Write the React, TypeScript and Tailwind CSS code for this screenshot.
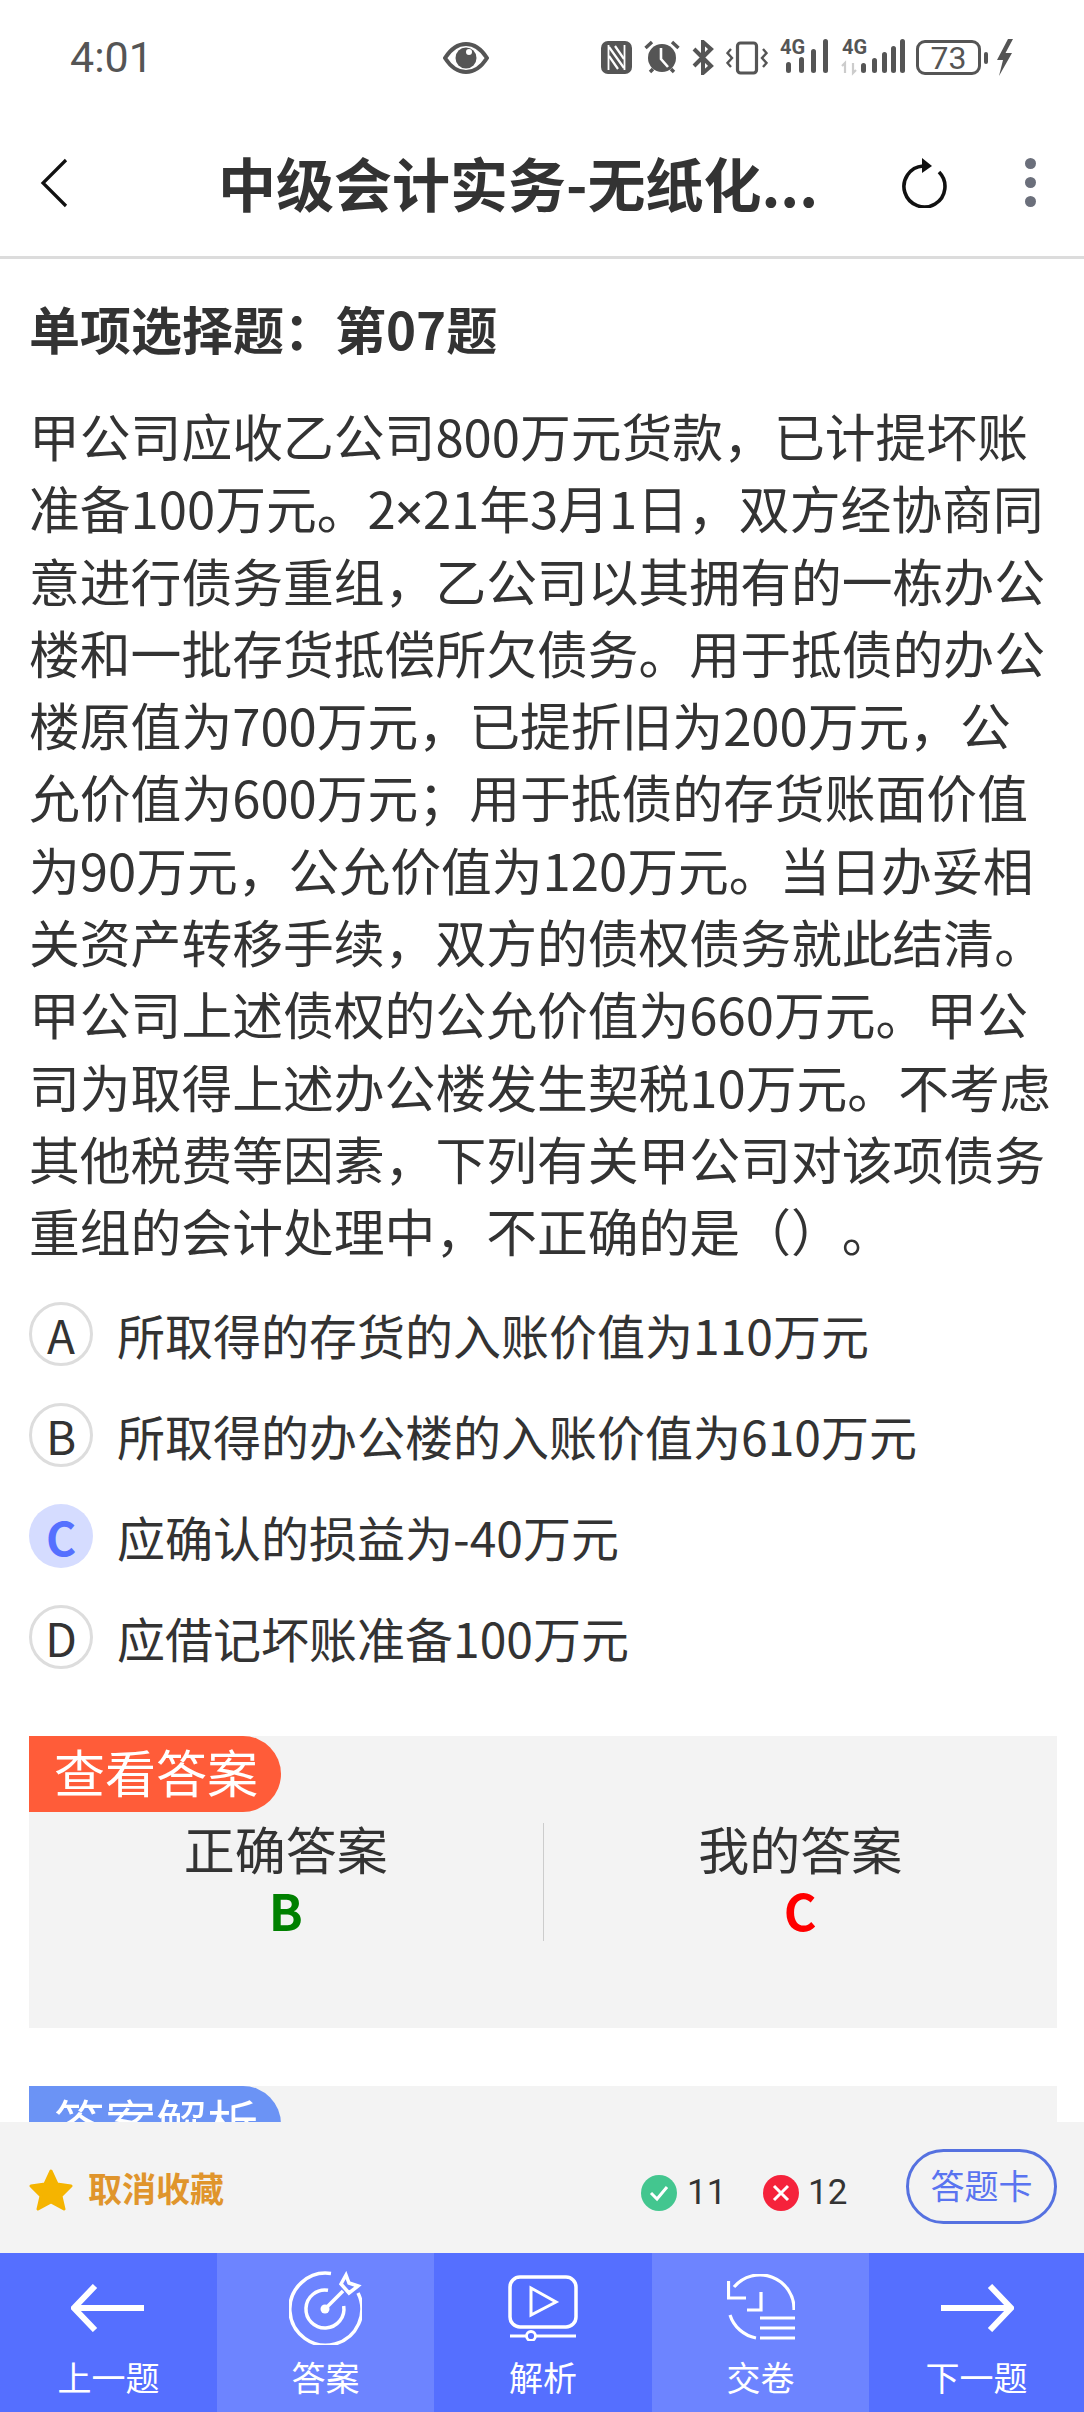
const questionLines = [
  "甲公司应收乙公司800万元货款，已计提坏账",
  "准备100万元。2",
  "意进行债务重组，乙公司以其拥有的一栋办公",
  "楼和一批存货抵偿所欠债务。用于抵债的办公",
  "楼原值为700万元，已提折旧为200万元，公",
  "允价值为600万元；用于抵债的存货账面价值",
  "为90万元，公允价值为120万元。当日办妥相",
  "关资产转移手续，双方的债权债务就此结清。",
  "甲公司上述债权的公允价值为660万元。甲公",
  "司为取得上述办公楼发生契税10万元。不考虑",
  "其他税费等因素，下列有关甲公司对该项债务",
  "重组的会计处理中，不正确的是（）。",
];

const options = [
  { key: "A", text: "所取得的存货的入账价值为110万元" },
  { key: "B", text: "所取得的办公楼的入账价值为610万元" },
  { key: "C", text: "应确认的损益为-40万元", selected: true },
  { key: "D", text: "应借记坏账准备100万元" },
];

function StatusIcons() {
  return (
    <div className="flex items-center text-[#555]">
      <svg width="31" height="33" viewBox="0 0 31 33" className="ml-[112px]">
        <rect width="31" height="33" rx="7" fill="#555" />
        <path d="M8 6l15 21M8 15l9 13M14 5l9 13" stroke="#fff" strokeWidth="2.2" fill="none" />
        <path d="M7.5 4v25M23.5 4v25" stroke="#fff" strokeWidth="1.8" fill="none" />
      </svg>
      <svg width="36" height="35" viewBox="0 0 36 35" className="ml-[12px]">
        <circle cx="18" cy="18" r="14" fill="#555" />
        <path d="M17 8v11l7 8" stroke="#fff" strokeWidth="2.6" fill="none" />
        <path d="M1.5 8L8 2M34.5 8L28 2M6 32l3-3M30 32l-3-3" stroke="#555" strokeWidth="3.4" fill="none" />
      </svg>
      <svg width="22" height="35" viewBox="0 0 22 35" className="ml-[12px]">
        <path d="M2 9l17 17-8 7V2l8 7L2 26" stroke="#555" strokeWidth="4" fill="none" />
      </svg>
      <svg width="42" height="34" viewBox="0 0 42 34" className="ml-[12px]">
        <rect x="11.5" y="2" width="19" height="30" rx="3" stroke="#555" strokeWidth="3.2" fill="none" />
        <path d="M5 8L1.5 12 6 17l-4.500 5L5 26M37 8l3.500 4-4.500 5 4.500 5L37 26" stroke="#555" strokeWidth="2.4" fill="none" />
      </svg>
      <svg width="50" height="36" viewBox="0 0 50 36" className="mb-[4px] ml-[12px] overflow-visible">
        <text x="0" y="16" fontSize="20" fontWeight="700" fill="#555" fontFamily="Roboto, sans-serif">4G</text>
        <rect x="6" y="24" width="5" height="11" rx="2.500" fill="#555" />
        <rect x="19" y="19" width="5" height="16" rx="2.500" fill="#555" />
        <rect x="31" y="11" width="5" height="24" rx="2.500" fill="#555" />
        <rect x="43" y="1" width="5" height="34" rx="2.500" fill="#555" />
      </svg>
      <svg width="63" height="36" viewBox="0 0 63 36" className="mb-[4px] ml-[12px] overflow-visible">
        <text x="0" y="16" fontSize="20" fontWeight="700" fill="#555" fontFamily="Roboto, sans-serif">4G</text>
        <path d="M3 35V25l-3 3M11 25v10l3-3" stroke="#ccc" strokeWidth="2.200" fill="none" />
        <rect x="19" y="25" width="5" height="10" rx="2.500" fill="#555" />
        <rect x="30" y="20" width="5" height="15" rx="2.500" fill="#555" />
        <rect x="40" y="14" width="5" height="21" rx="2.500" fill="#555" />
        <rect x="49" y="8" width="5" height="27" rx="2.500" fill="#555" />
        <rect x="58" y="1" width="5" height="34" rx="2.500" fill="#555" />
      </svg>
      <div className="ml-[11px] flex h-[35px] w-[65px] items-center justify-center rounded-[9px] border-[3px] border-[#555] font-['Roboto',sans-serif] text-[32px] leading-none">
        73
      </div>
      <div className="ml-[3px] h-[12px] w-[4px] rounded-full bg-[#555]"></div>
      <svg width="17" height="37" viewBox="0 0 17 37" className="ml-[8px]">
        <path d="M12 0L1 21h6L3 37 16 14H9.500L17 0z" fill="#555" />
      </svg>
    </div>
  );
}

function AnswerBox({ color, label, children }: { color: string; label: string; children?: React.ReactNode }) {
  return (
    <div className="ml-[29px] mr-[27px] bg-[#f3f3f3]">
      <div className={`flex h-[76px] w-[252px] items-center rounded-r-[38px] pb-[5px] pl-[25px] text-[51px] leading-none text-white ${color}`}>
        {label}
      </div>
      {children}
    </div>
  );
}

function Tab({ label, light, children }: { label: string; light?: boolean; children: React.ReactNode }) {
  return (
    <div className={`flex flex-col items-center ${light ? "bg-[#6d84ff]" : "bg-[#556fff]"}`}>
      <div className="flex h-[109px] items-center">{children}</div>
      <div className="text-[34px] leading-[30px] text-white">{label}</div>
    </div>
  );
}

export default function App() {
  return (
    <div className="relative h-[2412px] w-[1084px] overflow-hidden bg-white font-['Noto_Sans_CJK_SC',sans-serif] text-[#333] [text-spacing-trim:space-all]">
      {/* status bar */}
      <div className="flex h-[114px] items-center pl-[70px] pt-[1px]">
        <div className="w-[76px] whitespace-nowrap font-['Roboto',sans-serif] text-[43px] leading-none text-[#555]">4:01</div>
        <svg width="46" height="32" viewBox="0 0 46 32" className="ml-[297px]">
          <path d="M2 16C9 5 16 2 23 2s14 3 21 14c-7 11-14 14-21 14S9 27 2 16z" stroke="#555" strokeWidth="4" fill="none" />
          <circle cx="23" cy="16" r="10.500" fill="#555" />
          <circle cx="26" cy="10" r="3" fill="#fff" />
        </svg>
        <StatusIcons />
      </div>

      {/* header */}
      <div className="flex h-[145px] items-center border-b-[3px] border-[#dcdcdc] pb-[5px]">
        <svg width="28" height="50" viewBox="0 0 28 50" className="ml-[40px]">
          <path d="M26 2L3 25l23 23" stroke="#111" strokeWidth="3.200" fill="none" />
        </svg>
        <div className="mb-[2px] ml-[150px] w-[620px] whitespace-nowrap text-[58px] font-bold leading-none">中级会计实务-无纸化...</div>
        <svg width="46" height="50" viewBox="0 0 46 50" className="ml-[63px]">
          <path d="M22 8A20.500 20.500 0 1 0 38 14" stroke="#111" strokeWidth="3.600" fill="none" />
          <path d="M21 0l10 8-10 7z" fill="#111" />
        </svg>
        <div className="ml-[78px] flex flex-col gap-[8px]">
          <div className="h-[11px] w-[11px] rounded-full bg-[#6b6f7b]"></div>
          <div className="h-[11px] w-[11px] rounded-full bg-[#6b6f7b]"></div>
          <div className="h-[11px] w-[11px] rounded-full bg-[#6b6f7b]"></div>
        </div>
      </div>

      {/* question */}
      <div className="pl-[29px] pt-[33px]">
        <div className="text-[51px] font-bold leading-[72px]">单项选择题：第07题</div>
        <div className="mt-[35px] text-[50.800px] leading-[72.300px]">
          {questionLines.map((line, i) =>
            i === 1 ? (
              <div key={line} className="whitespace-nowrap">
                {line}
                <span className="font-['Roboto',sans-serif] leading-none">×</span>
                21年3月1日，双方经协商同
              </div>
            ) : (
              <div key={line} className="whitespace-nowrap">{line}</div>
            ),
          )}
        </div>
      </div>

      {/* options */}
      <div className="mt-[17px] pl-[29px]">
        {options.map((o) => (
          <div key={o.key} className="flex h-[101px] items-center">
            <div
              className={
                o.selected
                  ? "flex h-[64px] w-[64px] items-center justify-center rounded-full bg-[#d5dcff] text-[46px] font-bold leading-none text-[#5570ff]"
                  : "flex h-[64px] w-[64px] items-center justify-center rounded-full border-[3px] border-[#ddd] text-[46px] leading-none"
              }
            >
              {o.key}
            </div>
            <div className="ml-[24px] whitespace-nowrap text-[48px] leading-none">{o.text}</div>
          </div>
        ))}
      </div>

      {/* answers */}
      <div className="mt-[48px]">
        <AnswerBox color="bg-[#ff5c39]" label="查看答案">
          <div className="flex h-[216px] pt-[11px]">
            <div className="h-[118px] flex-1 text-center">
              <div className="text-[51px] leading-[50px]">正确答案</div>
              <div className="text-[50px] font-bold leading-[72px] text-[#008000]">B</div>
            </div>
            <div className="h-[118px] w-[1px] bg-[#ccc]"></div>
            <div className="h-[118px] flex-1 text-center">
              <div className="text-[51px] leading-[50px]">我的答案</div>
              <div className="text-[50px] font-bold leading-[72px] text-[#ff0000]">C</div>
            </div>
          </div>
        </AnswerBox>
        <div className="mt-[58px]">
          <AnswerBox color="bg-[#6b93f5]" label="答案解析">
            <div className="h-[216px]"></div>
          </AnswerBox>
        </div>
      </div>

      {/* bottom toolbar, sits over the scrolling content */}
      <div className="absolute inset-x-0 bottom-0">
        <div className="flex h-[131px] items-center bg-[#f3f3f3] pl-[29px] pr-[27px]">
          <svg width="44" height="42" viewBox="0 0 44 42" className="mt-[5px]">
            <path d="M22 2l6 13 14 2-10 10 3 13-13-7-13 7 3-13L2 17l14-2z" fill="#f5b400" stroke="#f5b400" strokeWidth="3" strokeLinejoin="round" />
          </svg>
          <div className="ml-[15px] w-[139px] whitespace-nowrap text-[34px] font-bold leading-none text-[#e0952c]">取消收藏</div>
          <svg width="36" height="36" viewBox="0 0 36 36" className="ml-[414px] mt-[10px]">
            <circle cx="18" cy="18" r="18" fill="#43c68f" />
            <path d="M10 18l6 6 10-12" stroke="#fff" strokeWidth="3" fill="none" />
          </svg>
          <div className="ml-[10px] mt-[10px] w-[33px] font-['Roboto',sans-serif] text-[35px] leading-none">11</div>
          <svg width="36" height="36" viewBox="0 0 36 36" className="ml-[43px] mt-[10px]">
            <circle cx="18" cy="18" r="18" fill="#f5223b" />
            <path d="M11 11l14 14M25 11L11 25" stroke="#fff" strokeWidth="3" fill="none" />
          </svg>
          <div className="ml-[9px] mt-[10px] w-[37px] font-['Roboto',sans-serif] text-[35px] leading-none">12</div>
          <div className="ml-auto mt-[-2px] flex h-[75px] w-[151px] items-center justify-center rounded-[38px] border-[3px] border-[#5571e0] pb-[3px] text-[34px] leading-none text-[#5a74f0]">
            答题卡
          </div>
        </div>
        <div className="grid h-[159px] grid-cols-[217px_217px_218px_217px_215px]">
          <Tab label="上一题">
            <svg width="75" height="48" viewBox="0 0 75 48">
              <path d="M73 24H4M24 2L3 24l21 22" stroke="#fff" strokeWidth="6" fill="none" />
            </svg>
          </Tab>
          <Tab label="答案" light>
            <svg width="73" height="74" viewBox="0 0 73 74">
              <g stroke="#fff" strokeWidth="3.500" fill="none">
                <path d="M42 2.500A36 36 0 1 0 69 22" />
                <path d="M39 19.300A19 19 0 1 0 54.700 35" />
                <path d="M36 38L54 20" />
                <path d="M52 13l5-9 3 8 9 3-9 7z" />
              </g>
              <circle cx="36" cy="38" r="4.500" fill="#fff" />
            </svg>
          </Tab>
          <Tab label="解析">
            <svg width="70" height="66" viewBox="0 0 70 66">
              <g stroke="#fff" fill="none">
                <rect x="2" y="2" width="66" height="50" rx="10" strokeWidth="3.500" />
                <path d="M23 13l25 14-25 13z" strokeWidth="3" />
                <path d="M2 61h16M28 61h40" strokeWidth="3" />
                <circle cx="23" cy="61" r="4.500" strokeWidth="2.800" />
              </g>
            </svg>
          </Tab>
          <Tab label="交卷" light>
            <svg width="68" height="68" viewBox="0 0 68 68">
              <g stroke="#fff" strokeWidth="3.200" fill="none">
                <path d="M7 13A34 34 0 0 1 67 36" />
                <path d="M1.500 7v17H19" />
                <path d="M34 18v18H20" />
                <path d="M3 41A34 34 0 0 0 29 64" />
                <path d="M33 44h35M33 54h35M33 64h35" />
              </g>
            </svg>
          </Tab>
          <Tab label="下一题">
            <svg width="75" height="48" viewBox="0 0 75 48">
              <path d="M2 24h69M51 2l21 22-21 22" stroke="#fff" strokeWidth="6" fill="none" />
            </svg>
          </Tab>
        </div>
      </div>
    </div>
  );
}
